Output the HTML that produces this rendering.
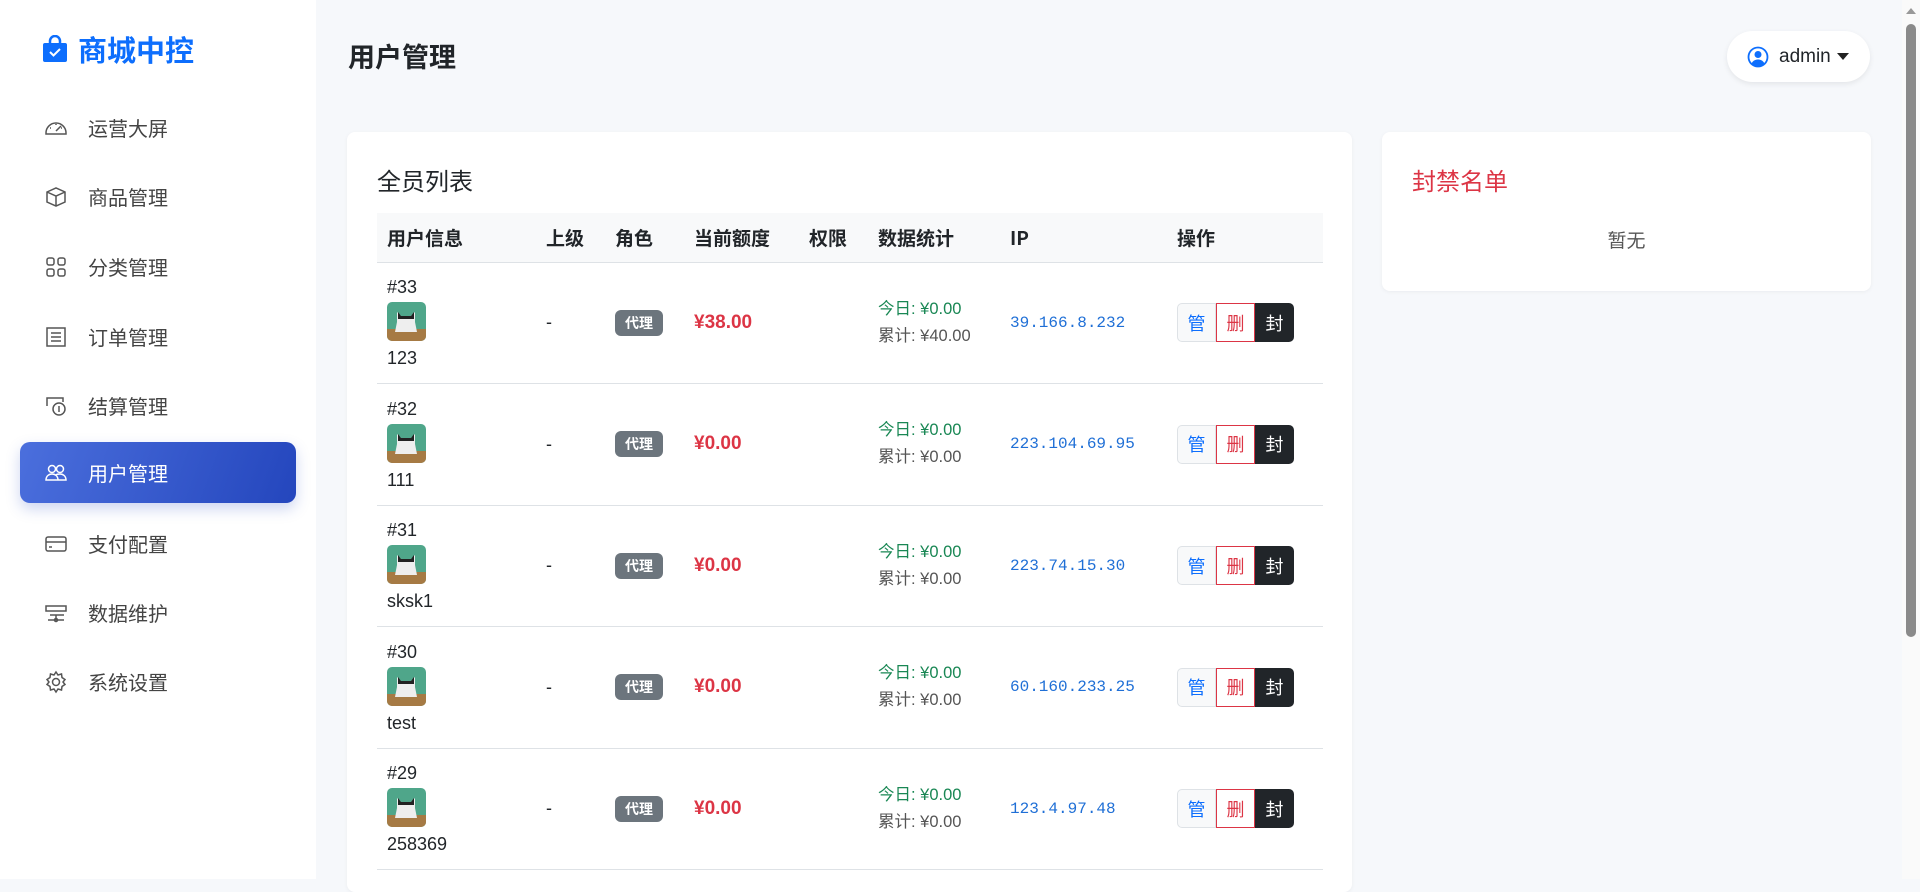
<!DOCTYPE html>
<html><head><meta charset="utf-8"><style>
*{box-sizing:border-box;margin:0;padding:0}
body{width:1920px;height:879px;overflow:hidden;background:#f6f8fb;font-family:"Liberation Sans","Noto Sans CJK SC",sans-serif;color:#212529;position:relative}
.side{position:absolute;left:0;top:0;width:316px;height:879px;background:#fff}
.logo{position:absolute;left:42px;top:28px;display:flex;align-items:center;color:#0d6efd;font-weight:700;font-size:29px;font-family:"Noto Sans CJK SC",sans-serif}
.logo svg{margin-right:10px}
.nav{position:absolute;left:20px;width:276px;height:61px;display:flex;align-items:center;padding-left:24px;font-size:20px;color:#444;font-family:"Noto Sans CJK SC",sans-serif;border-radius:10px}
.nav svg{width:24px;height:24px;margin-right:20px;stroke:#555;fill:none;stroke-width:1.5}
.nav.act{background:linear-gradient(110deg,#4b6fdd,#2446bd);color:#fff;box-shadow:0 6px 14px rgba(60,90,200,.25)}
.nav.act svg{stroke:#fff}
h1{position:absolute;left:348px;top:36px;font-size:27px;font-weight:700;font-family:"Noto Sans CJK SC",sans-serif}
.admin{position:absolute;left:1727px;top:31px;width:143px;height:51px;background:#fff;border-radius:26px;box-shadow:0 2px 6px rgba(0,0,0,.08);display:flex;align-items:center;padding-left:20px;font-size:19px}
.admin .car{width:0;height:0;border-left:6px solid transparent;border-right:6px solid transparent;border-top:7px solid #222;margin-left:6px}
.card{position:absolute;background:#fff;border-radius:8px;box-shadow:0 1px 4px rgba(0,0,0,.05)}
.ct{position:absolute;left:30px;top:30px;font-size:24px;font-family:"Noto Sans CJK SC",sans-serif}
table{position:absolute;left:30px;top:81px;width:946px;border-collapse:collapse;font-family:"Liberation Sans","Noto Sans CJK SC",sans-serif}
th{height:49px;background:#f8f9fa;text-align:left;font-size:19px;font-weight:700;border-bottom:1px solid #dee2e6;padding-left:10px;font-family:"Noto Sans CJK SC",sans-serif}
td{height:121.5px;border-bottom:1px solid #dee2e6;padding-left:10px;vertical-align:middle;font-size:18px}
.uid{line-height:26px}
.av{display:block;width:39px;height:39px;border-radius:5px;overflow:hidden;margin:2px 0 4px}
.badge{display:inline-block;background:#6c757d;color:#fff;font-size:14px;font-weight:700;padding:3px 10px;border-radius:6px;font-family:"Noto Sans CJK SC",sans-serif}
.price{color:#dc3545;font-weight:700;font-size:19px}
.st{font-size:16.5px;line-height:27px}
.g{color:#198754}.gr{color:#555}
.ip{font-family:"Liberation Mono",monospace;color:#1f6fd6;font-size:16px}
.btns{display:flex;height:39px;font-family:"Noto Sans CJK SC",sans-serif;font-size:18px}
.btns span{width:39px;display:flex;align-items:center;justify-content:center}
.b1{background:#f8f9fa;border:1px solid #dee2e6;color:#0d6efd;border-radius:5px 0 0 5px}
.b2{border:1px solid #dc3545;color:#dc3545}
.b3{background:#212529;color:#fff;border-radius:0 5px 5px 0}
.sb{position:absolute;left:1902px;top:0;width:18px;height:879px;background:#fafafa}
.sb .th{position:absolute;left:4px;top:24px;width:10px;height:613px;background:#8a8a8a;border-radius:5px}
.sb .ar{position:absolute;left:4px;top:8px;border-left:5px solid transparent;border-right:5px solid transparent;border-bottom:6px solid #999}
</style></head><body>
<div class="side">
 <div class="logo"><svg width="26" height="28" viewBox="0 0 26 28"><path d="M8 9V6a5 5 0 0 1 10 0v3" stroke="#0d6efd" stroke-width="2.5" fill="none"/><rect x="1" y="8" width="24" height="19" rx="2" fill="#0d6efd"/><path d="M8 17l3.5 3.5L18 14" stroke="#fff" stroke-width="2" fill="none"/></svg>商城中控</div>
 <div class="nav" style="top:97px"><svg viewBox="0 0 24 24"><path d="M2 17a10 10 0 0 1 20 0v1H2z"/><path d="M12 15l5-5M6 12h1M17 12h1M12 8v1"/></svg>运营大屏</div>
 <div class="nav" style="top:166px"><svg viewBox="0 0 24 24"><path d="M3 7l9-4 9 4v10l-9 4-9-4z M3 7l9 4 9-4 M12 11v10"/></svg>商品管理</div>
 <div class="nav" style="top:236px"><svg viewBox="0 0 24 24"><rect x="3" y="3" width="7" height="7" rx="2"/><rect x="14" y="3" width="7" height="7" rx="2"/><rect x="3" y="14" width="7" height="7" rx="2"/><rect x="14" y="14" width="7" height="7" rx="2"/></svg>分类管理</div>
 <div class="nav" style="top:306px"><svg viewBox="0 0 24 24"><rect x="3" y="3" width="18" height="18"/><path d="M7 8h10M7 12h10M7 16h10"/></svg>订单管理</div>
 <div class="nav" style="top:375px"><svg viewBox="0 0 24 24"><path d="M3 12V4h16v4"/><circle cx="15" cy="15" r="6"/><path d="M15 12v6"/></svg>结算管理</div>
 <div class="nav act" style="top:442px"><svg viewBox="0 0 24 24"><circle cx="8" cy="8" r="3.5"/><circle cx="16" cy="8" r="3.5"/><path d="M2 19c0-4 3-6 6-6s6 2 6 6zM12 14c1-1 2.5-1 4-1 3 0 6 2 6 6h-8"/></svg>用户管理</div>
 <div class="nav" style="top:513px"><svg viewBox="0 0 24 24"><rect x="2" y="5" width="20" height="14" rx="2"/><path d="M2 10h20M5 15h3"/></svg>支付配置</div>
 <div class="nav" style="top:582px"><svg viewBox="0 0 24 24"><rect x="2" y="5" width="20" height="5"/><path d="M6 14h14M12 14v5M4 19h16"/><circle cx="12" cy="19" r="1.5"/></svg>数据维护</div>
 <div class="nav" style="top:651px"><svg viewBox="0 0 24 24"><circle cx="12" cy="12" r="3.5"/><path d="M12 2l2 3 3.5-1 .5 3.5 3 2-2 2.5 2 2.5-3 2-.5 3.5-3.5-1-2 3-2-3-3.5 1-.5-3.5-3-2 2-2.5-2-2.5 3-2 .5-3.5 3.5 1z"/></svg>系统设置</div>
</div>
<h1>用户管理</h1>
<div class="admin"><svg width="22" height="22" viewBox="0 0 22 22" style="margin-right:10px"><circle cx="11" cy="11" r="9.5" fill="none" stroke="#0d6efd" stroke-width="1.8"/><circle cx="11" cy="8.5" r="3.5" fill="#0d6efd"/><path d="M4.5 17.5c1.5-3 4-4 6.5-4s5 1 6.5 4a9 9 0 0 1-13 0z" fill="#0d6efd"/></svg>admin<span class="car"></span></div>

<div class="card" style="left:347px;top:132px;width:1005px;height:760px">
 <div class="ct">全员列表</div>
 <table>
  <tr><th style="width:159px">用户信息</th><th style="width:69px">上级</th><th style="width:79px">角色</th><th style="width:115px">当前额度</th><th style="width:69px">权限</th><th style="width:132px">数据统计</th><th style="width:167px">IP</th><th>操作</th></tr>
  <tr><td><div class="uid">#33<span class="av"><svg width="39" height="39"><rect width="39" height="39" fill="#4fa68a"/><rect y="27" width="39" height="12" fill="#a67a44"/><path d="M10 10l4 4h10l4-4v10l2 10H8l2-10z" fill="#eee"/><path d="M11 10l3 4h10l3-4v7H11z" fill="#222"/></svg></span>123</div></td><td>-</td><td><span class="badge">代理</span></td><td class="price">¥38.00</td><td></td><td class="st"><div class="g">今日: ¥0.00</div><div class="gr">累计: ¥40.00</div></td><td class="ip">39.166.8.232</td><td><div class="btns"><span class="b1">管</span><span class="b2">删</span><span class="b3">封</span></div></td></tr>
  <tr><td><div class="uid">#32<span class="av"><svg width="39" height="39"><rect width="39" height="39" fill="#4fa68a"/><rect y="27" width="39" height="12" fill="#a67a44"/><path d="M10 10l4 4h10l4-4v10l2 10H8l2-10z" fill="#eee"/><path d="M11 10l3 4h10l3-4v7H11z" fill="#222"/></svg></span>111</div></td><td>-</td><td><span class="badge">代理</span></td><td class="price">¥0.00</td><td></td><td class="st"><div class="g">今日: ¥0.00</div><div class="gr">累计: ¥0.00</div></td><td class="ip">223.104.69.95</td><td><div class="btns"><span class="b1">管</span><span class="b2">删</span><span class="b3">封</span></div></td></tr>
  <tr><td><div class="uid">#31<span class="av"><svg width="39" height="39"><rect width="39" height="39" fill="#4fa68a"/><rect y="27" width="39" height="12" fill="#a67a44"/><path d="M10 10l4 4h10l4-4v10l2 10H8l2-10z" fill="#eee"/><path d="M11 10l3 4h10l3-4v7H11z" fill="#222"/></svg></span>sksk1</div></td><td>-</td><td><span class="badge">代理</span></td><td class="price">¥0.00</td><td></td><td class="st"><div class="g">今日: ¥0.00</div><div class="gr">累计: ¥0.00</div></td><td class="ip">223.74.15.30</td><td><div class="btns"><span class="b1">管</span><span class="b2">删</span><span class="b3">封</span></div></td></tr>
  <tr><td><div class="uid">#30<span class="av"><svg width="39" height="39"><rect width="39" height="39" fill="#4fa68a"/><rect y="27" width="39" height="12" fill="#a67a44"/><path d="M10 10l4 4h10l4-4v10l2 10H8l2-10z" fill="#eee"/><path d="M11 10l3 4h10l3-4v7H11z" fill="#222"/></svg></span>test</div></td><td>-</td><td><span class="badge">代理</span></td><td class="price">¥0.00</td><td></td><td class="st"><div class="g">今日: ¥0.00</div><div class="gr">累计: ¥0.00</div></td><td class="ip">60.160.233.25</td><td><div class="btns"><span class="b1">管</span><span class="b2">删</span><span class="b3">封</span></div></td></tr>
  <tr><td><div class="uid">#29<span class="av"><svg width="39" height="39"><rect width="39" height="39" fill="#4fa68a"/><rect y="27" width="39" height="12" fill="#a67a44"/><path d="M10 10l4 4h10l4-4v10l2 10H8l2-10z" fill="#eee"/><path d="M11 10l3 4h10l3-4v7H11z" fill="#222"/></svg></span>258369</div></td><td>-</td><td><span class="badge">代理</span></td><td class="price">¥0.00</td><td></td><td class="st"><div class="g">今日: ¥0.00</div><div class="gr">累计: ¥0.00</div></td><td class="ip">123.4.97.48</td><td><div class="btns"><span class="b1">管</span><span class="b2">删</span><span class="b3">封</span></div></td></tr>
 </table>
</div>

<div class="card" style="left:1382px;top:132px;width:489px;height:159px">
 <div class="ct" style="color:#dc3545">封禁名单</div>
 <div style="position:absolute;left:0;right:0;top:94px;text-align:center;font-size:19px;color:#555;font-family:'Noto Sans CJK SC',sans-serif">暂无</div>
</div>
<div class="sb"><div class="ar"></div><div class="th"></div></div>
</body></html>
